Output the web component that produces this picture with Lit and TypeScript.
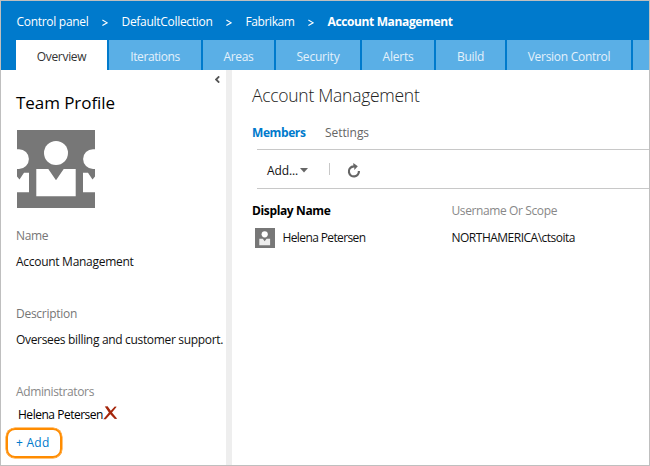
import { LitElement, html, css } from "lit";
import { customElement, property, state } from "lit/decorators.js";

/** A run of text tracked so that it fills the given width. */
@customElement("ui-text")
class UiText extends LitElement {
  static styles = css`
    :host { display: block; white-space: nowrap; }
    .run { display: inline-block; }
  `;
  @property() text = "";
  @property({ type: Number }) width = 0;
  @state() tracking = 0;

  firstUpdated() {
    const run = this.renderRoot.querySelector(".run") as HTMLElement;
    const natural = run.getBoundingClientRect().width;
    this.tracking = (this.width - natural) / this.text.length;
  }
  render() {
    return html`<span class="run" style="letter-spacing:${this.tracking}px">${this.text}</span>`;
  }
}

const crumbs: [string, number][] = [
  ["Control panel", 72], ["DefaultCollection", 91], ["Fabrikam", 49],
];
const tabs: [string, number, number][] = [
  ["Overview", 91, 49.5], ["Iterations", 92, 49.5], ["Areas", 71, 30], ["Security", 84, 43],
  ["Alerts", 72, 31], ["Build", 69, 27], ["Version Control", 124, 82.5],
];

@customElement("app-root")
class AppRoot extends LitElement {
  static styles = css`
    :host {
      display: flex; flex-direction: column; box-sizing: border-box;
      width: 650px; height: 466px; overflow: hidden;
      border: 1px solid #bfbfbf; background: #fff; color: #111;
      font: 12px/16px "Open Sans", "Noto Sans", sans-serif;
    }
    svg { display: block; flex: none; }
    header { background: #007acc; height: 69px; flex: none; overflow: hidden; }
    .crumbs { display: flex; height: 39px; padding: 13px 0 0 15.5px; box-sizing: border-box; color: #fff; }
    .arrow { width: 6px; height: 8px; margin: 5px 14px 0 13px; }
    .bold { font-weight: 700; }
    .tabs { display: flex; gap: 2px; padding-left: 15px; height: 30px; }
    .tab { flex: none; display: flex; justify-content: center; box-sizing: border-box; padding-top: 9px; background: #5aafe6; color: #e4f1fb; }
    .tab.active { background: #fff; color: #333; }
    .tab.more { width: 20px; }
    main { display: flex; flex: 1; min-height: 0; }
    aside { width: 225px; flex: none; display: flex; flex-direction: column; box-sizing: border-box; padding-left: 15px; }
    .collapse { align-self: flex-end; margin: 6px 6px 0 0; }
    .profile { font-size: 17px; line-height: 24px; color: #000; margin: 8px 0 15px; }
    .label { color: #767676; }
    .value { margin: 10px 0 36px; }
    .admins { color: #888; }
    .admin { display: flex; padding-left: 2px; margin-top: 7px; height: 16px; color: #000; }
    .delete { margin-top: -1px; }
    .add { box-sizing: border-box; width: 56px; height: 30px; margin: 5px 0 0 -10px; padding: 5px 0 0 8px; border: 2px solid #ff8c00; box-shadow: 0 0 0 0.5px #ff8c00; border-radius: 9px; color: #007acc; }
    .splitter { width: 6px; flex: none; background: #eee; }
    section { flex: 1; min-width: 0; padding-left: 20px; }
    .title { font-size: 17.5px; line-height: 24px; font-weight: 300; color: #222; margin-top: 13px; }
    .pivots { display: flex; gap: 19.5px; margin-top: 18px; height: 24px; color: #666; }
    .pivots .bold { color: #007acc; }
    .toolbar { box-sizing: border-box; display: flex; height: 40px; margin-left: 5px; padding: 13px 0 0 10px; border-top: 1px solid #c8c8c8; border-bottom: 1px solid #c8c8c8; }
    .caret { margin: 5px 21px 0 2px; }
    .sep { width: 1px; height: 12px; background: #c8c8c8; }
    .reload { margin: 0 0 0 17px; }
    .grid { display: grid; grid-template-columns: 199.5px 1fr; margin-top: 14px; }
    .head { color: #888; }
    .head.bold { color: #000; }
    .member { display: flex; gap: 7.5px; padding: 9px 0 0 3px; }
    .member ui-text, .scope { padding-top: 2px; }
    .scope { margin-top: 9px; }
  `;

  text(text: string, width: number, cls = "") {
    return html`<ui-text class=${cls} .text=${text} .width=${width}></ui-text>`;
  }

  arrow() {
    return html`<svg class="arrow" viewBox="0 0 6 8"><path d="M.4 1 5.2 3.800.4 6.600" fill="none" stroke="#fff" stroke-width="1.1"/></svg>`;
  }

  render() {
    return html`
      <header>
        <div class="crumbs">
          ${crumbs.map(([t, w]) => html`${this.text(t, w)}${this.arrow()}`)}
          ${this.text("Account Management", 125, "bold")}
        </div>
        <nav class="tabs">
          ${tabs.map(([t, w, tw], i) => html`<div class="tab ${i ? "" : "active"}" style="width:${w}px">${this.text(t, tw)}</div>`)}
          <div class="tab more"></div>
        </nav>
      </header>
      <main>
        <aside>
          <svg class="collapse" width="5" height="7" viewBox="0 0 5 7"><path d="M4.200.400 1.100 3.500l3.100 3.100" fill="none" stroke="#555" stroke-width="1.800"/></svg>
          ${this.text("Team Profile", 99, "profile")}
          <svg width="80" height="98" viewBox="-1 0 80 98">
            <path fill="#777" d="M0 0h78v78H0z"/>
            <g fill="#fff">
              <circle cx="39" cy="23" r="12"/>
              <path d="M19.300 39h12L39 50.200 46.700 39h12v27.300H19.300z"/>
              <path d="M0 19.200h2a9.900 9.900 0 0 1 0 19.800H0zM78 19.200h-2a9.900 9.900 0 0 0 0 19.800h2z"/>
              <path d="M0 46.500 2.500 49.500 7 42.700h5v19.600H0zM78 46.500 75.500 49.500 71 42.700h-5v19.600h12z"/>
            </g>
          </svg>
          ${this.text("Name", 32, "label")}
          ${this.text("Account Management", 117.5, "value")}
          ${this.text("Description", 61, "label")}
          ${this.text("Oversees billing and customer support.", 207, "value")}
          ${this.text("Administrators", 78, "admins")}
          <div class="admin">
            ${this.text("Helena Petersen", 85)}
            <svg class="delete" width="15" height="14" viewBox="0 0 15 14"><path fill="#a5260b" d="M1.800.600 4.600.300 7.800 4.700 11.800.600 13.700.700 9 6.400 14.200 12.700 11.800 12.900 7.300 8.300 2.800 13.300.300 13.200 5.900 6.600z"/></svg>
          </div>
          <div class="add">${this.text("+ Add", 33.5)}</div>
        </aside>
        <div class="splitter"></div>
        <section>
          ${this.text("Account Management", 167.5, "title")}
          <div class="pivots">${this.text("Members", 53.5, "bold")}${this.text("Settings", 44)}</div>
          <div class="toolbar">
            ${this.text("Add...", 31)}
            <svg class="caret" width="8" height="5" viewBox="0 0 8 5"><path fill="#666" d="M0 0h8L4 4.500z"/></svg>
            <div class="sep"></div>
            <svg class="reload" width="14" height="15" viewBox="0 0 14 15">
              <path d="M5.500 3.600A5 5 0 1 0 11.900 8" fill="none" stroke="#666" stroke-width="2.200"/>
              <path d="M6.300 0 10.800 3.200 7.300 7V4.600L4.500 5V2.800L6.300 2.400z" fill="#666"/>
            </svg>
          </div>
          <div class="grid">
            ${this.text("Display Name", 78.5, "head bold")}
            ${this.text("Username Or Scope", 105.5, "head")}
            <div class="member">
              <svg width="20" height="20" viewBox="0 0 20 20">
                <path fill="#777" d="M0 0h20v20H0z"/>
                <circle cx="9.700" cy="6.300" r="3.100" fill="#fff"/>
                <path fill="#eee" d="M4.300 10.700h3.500l1.900 2.600 1.900-2.600h3.500v6.500H4.300z"/>
              </svg>
              ${this.text("Helena Petersen", 83)}
            </div>
            ${this.text("NORTHAMERICA\\ctsoita", 123.5, "scope")}
          </div>
        </section>
      </main>
    `;
  }
}
